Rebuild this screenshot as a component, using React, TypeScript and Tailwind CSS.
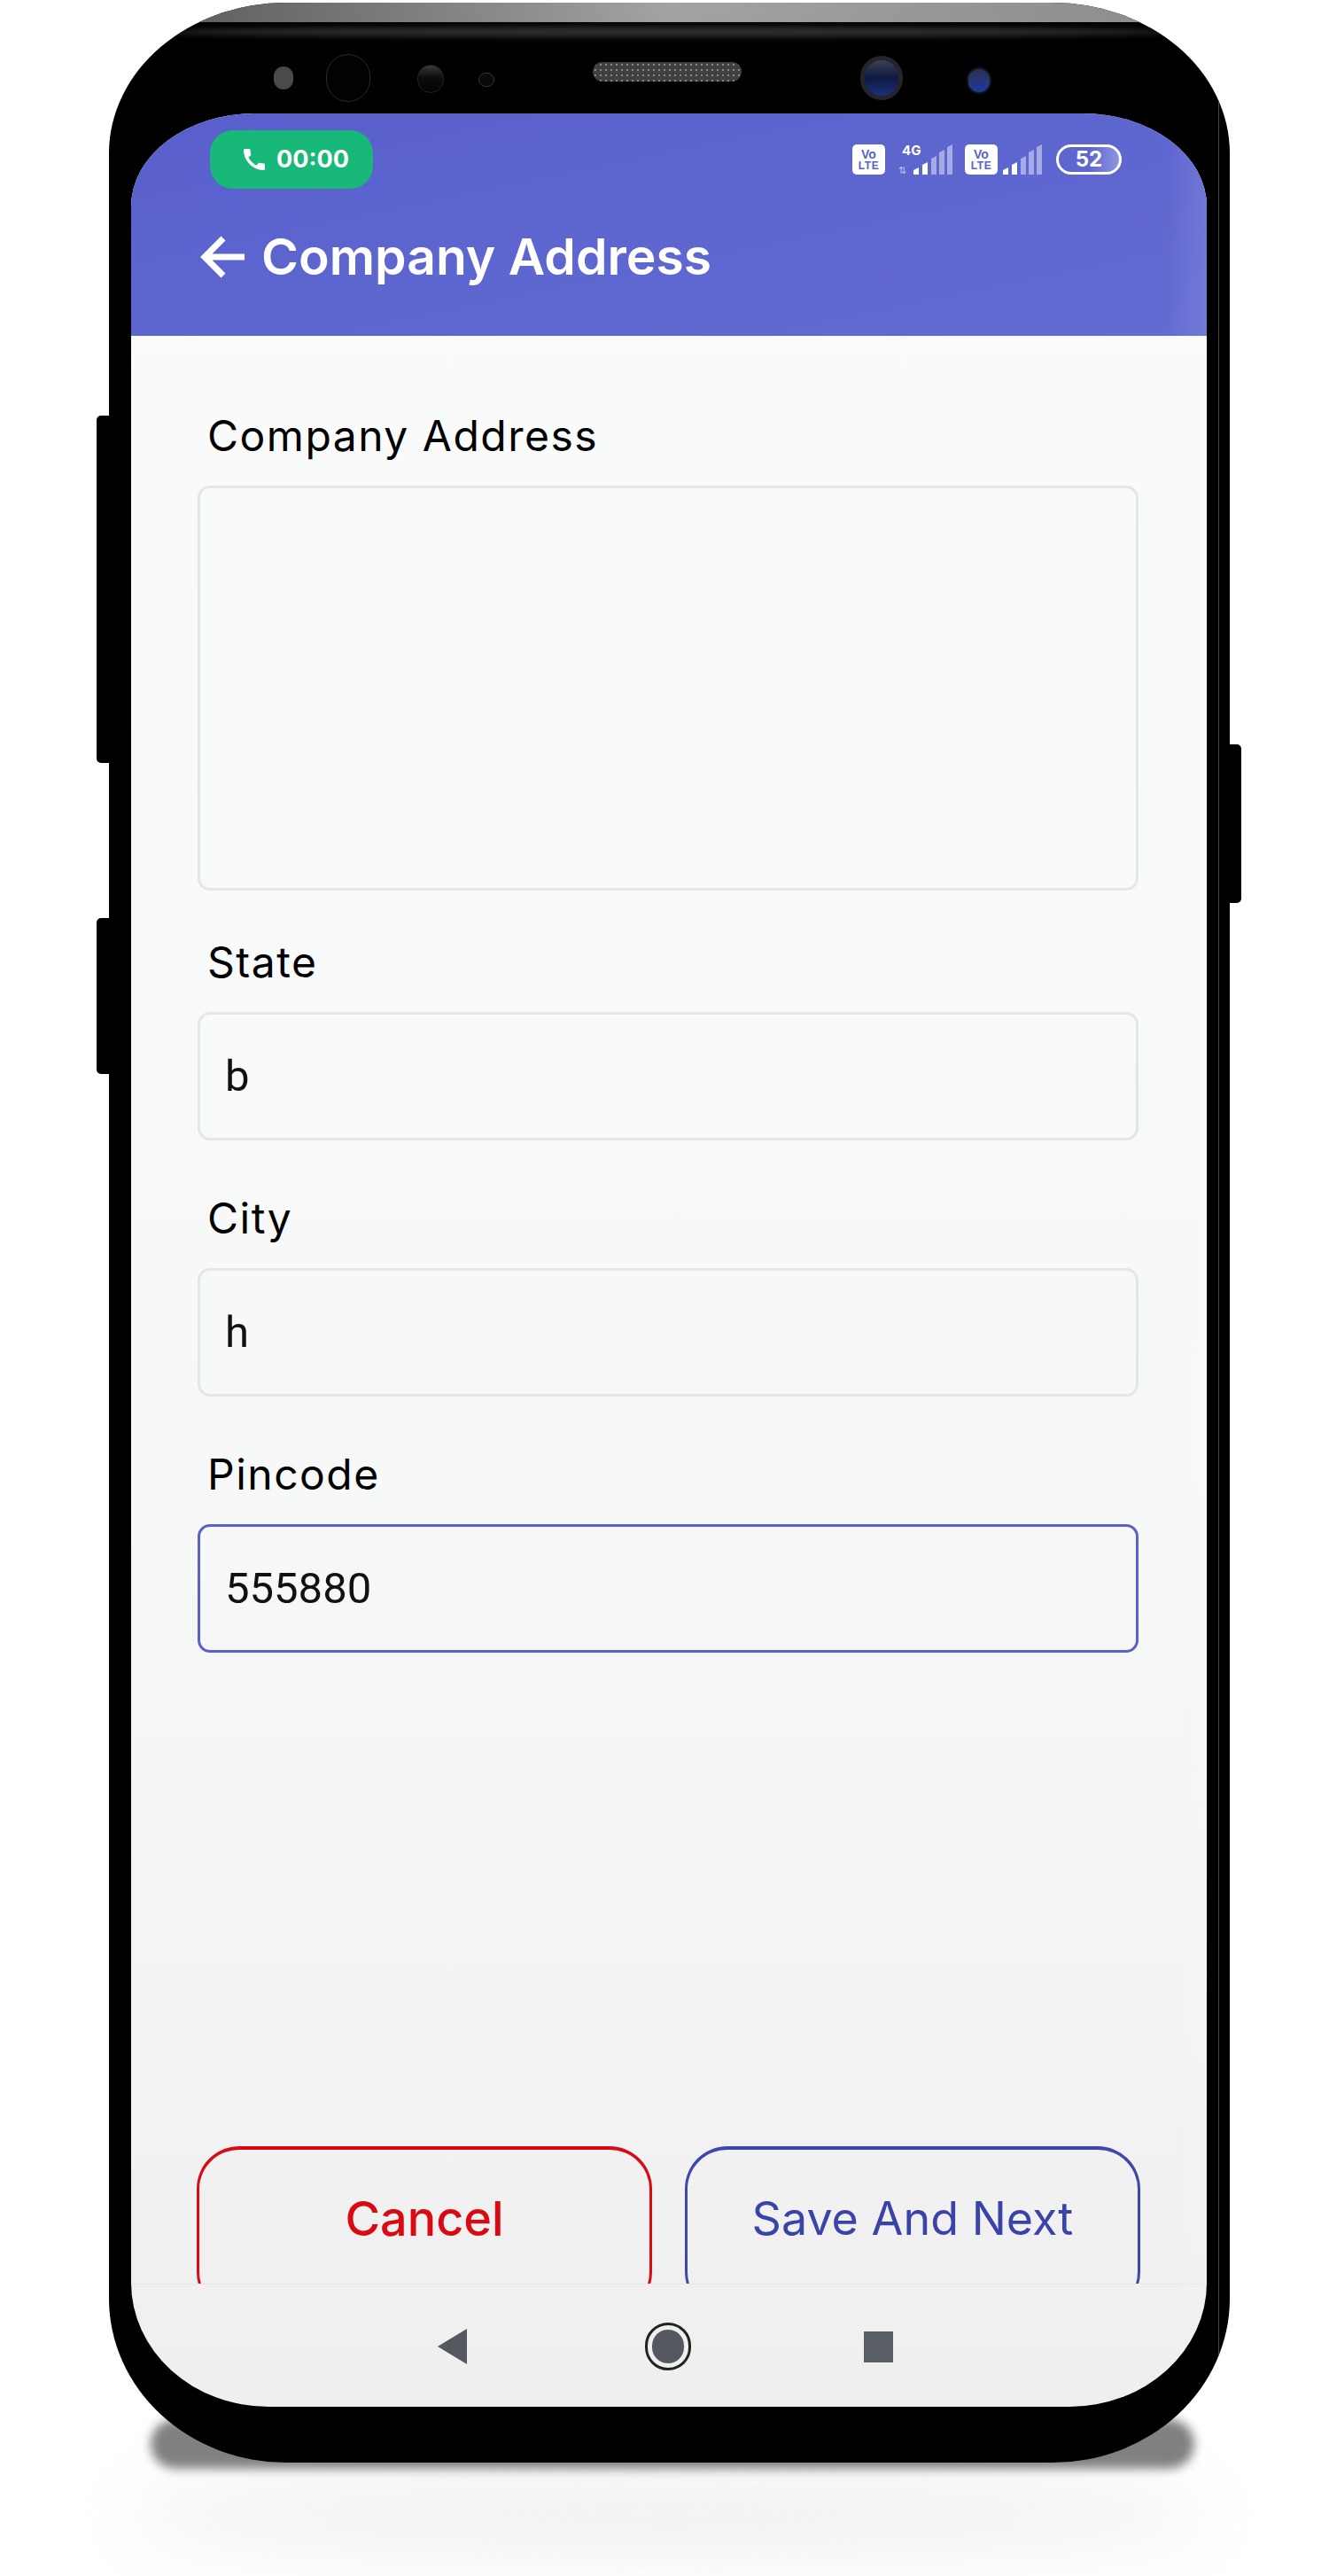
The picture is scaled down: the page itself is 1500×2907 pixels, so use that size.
import { MdCall } from "react-icons/md";

const poppins = "font-['Inter','Liberation_Sans',sans-serif]";

function Volte() {
  return (
    <div className="flex h-[34px] w-[37px] flex-col items-center justify-center rounded-[5px] bg-white font-['Liberation_Sans',sans-serif] font-bold text-[#5a62c8]">
      <span className="text-[14px] leading-[14px]">Vo</span>
      <span className="text-[12px] leading-[13px] tracking-[0.5px]">LTE</span>
    </div>
  );
}

function Signal() {
  const bars = [
    { x: 0, h: 8 },
    { x: 10, h: 14 },
    { x: 20, h: 21 },
    { x: 29, h: 28 },
    { x: 38, h: 34 },
  ];
  return (
    <svg width="44" height="34" viewBox="0 0 44 34" className="block">
      {bars.map((b, i) => (
        <path
          key={b.x}
          d={`M${b.x} 34V${37 - b.h}L${b.x + 6} ${34 - b.h}V34Z`}
          fill="white"
          opacity={i < 2 ? 1 : 0.45}
        />
      ))}
    </svg>
  );
}

function Field({
  label,
  value,
  active,
  tall,
  className,
}: {
  label: string;
  value?: string;
  active?: boolean;
  tall?: boolean;
  className?: string;
}) {
  return (
    <div className={`flex flex-col ${className ?? ""}`}>
      <label className={`${poppins} mb-[14px] flex h-[84px] items-center pl-[11px] text-[48px] tracking-[1.5px] text-black`}>
        {label}
      </label>
      {tall ? (
        <textarea
          readOnly
          className="h-[457px] resize-none rounded-[14px] border-[3px] border-[#e4e7e9] bg-transparent outline-none"
        />
      ) : (
        <input
          readOnly
          value={value}
          className={`h-[145px] rounded-[14px] bg-transparent pl-[28px] font-['Roboto',sans-serif] text-[49px] text-[#111] outline-none ${
            active ? "border-[3px] border-[#5b61cb]" : "border-[3px] border-[#e4e7e9]"
          }`}
        />
      )}
    </div>
  );
}

export default function App() {
  return (
    <div className="relative h-[2907px] w-[1500px] overflow-hidden bg-white pt-[3px] pl-[123px]">
      {/* floor shadow */}
      <div className="absolute top-[2795px] left-[140px] h-[85px] w-[1230px] rounded-[50%] bg-[#efefef] blur-2xl" />
      <div className="absolute top-[2730px] left-[170px] h-[56px] w-[1178px] rounded-[30px] bg-[#808080] blur-[6px]" />

      {/* side keys */}
      <div className="absolute top-[469px] left-[109px] h-[392px] w-[18px] rounded-l-[5px] bg-black" />
      <div className="absolute top-[1036px] left-[109px] h-[176px] w-[18px] rounded-l-[5px] bg-black" />
      <div className="absolute top-[840px] left-[1384px] h-[179px] w-[17px] rounded-r-[5px] bg-black" />

      <div className="relative flex h-[2776px] w-[1265px] flex-col overflow-hidden rounded-[200px_200px_200px_200px/170px_170px_185px_185px] bg-black pt-[125px] pr-[26px] pb-[63px] pl-[25px]">
        {/* top edge */}
        <div className="absolute top-0 left-0 h-[22px] w-full bg-linear-to-r from-[#555] via-[#a3a3a3] to-[#8a8a8a]" />
        <div className="absolute top-[27px] left-[60px] h-[12px] w-[1145px] rounded-[50%] bg-[#2c2c2c] blur-[3px]" />
        <div className="absolute top-0 right-[12px] h-full w-px bg-[#444]" />

        {/* sensors */}
        <div className="absolute top-[72px] left-[186px] h-[26px] w-[22px] rounded-full bg-[#4a4a4a]" />
        <div className="absolute top-[58px] left-[245px] h-[54px] w-[50px] rounded-full border border-[#2a2a2a] bg-[#020202]" />
        <div className="absolute top-[70px] left-[348px] h-[32px] w-[30px] rounded-full border border-[#222] bg-linear-to-b from-[#3a3a3a] via-[#0a0a0a] to-[#050505]" />
        <div className="absolute top-[79px] left-[417px] h-[16px] w-[18px] rounded-full border border-[#333] bg-[#0a0a0a]" />
        <div className="absolute top-[67px] left-[546px] h-[22px] w-[168px] rounded-full bg-[radial-gradient(#8a8a8a_1px,#3f3f3f_1.5px)] bg-[length:6px_6px]" />
        <div className="absolute top-[60px] left-[848px] h-[50px] w-[48px] rounded-full border-[5px] border-[#23252b] bg-linear-to-b from-[#3c4052] via-[#10193f] to-[#1a2f80]" />
        <div className="absolute top-[73px] left-[968px] h-[30px] w-[28px] rounded-full border-2 border-[#15151a] bg-linear-to-b from-[#2a3050] to-[#1c3aa0]" />

        {/* screen */}
        <div className="relative flex flex-1 flex-col overflow-hidden rounded-[140px_140px_155px_155px/105px_105px_140px_140px] bg-linear-to-b from-[#fafbfb] via-[#f7f8f8] via-60% to-[#efefef]">
          <header className="h-[251px] shrink-0 bg-linear-to-br from-[#585fcc] to-[#636cd2] pt-[19px]">
            <div className="flex items-center justify-between pr-[96px] pl-[89px]">
              <div className="flex h-[66px] w-[184px] items-center gap-[9px] rounded-[26px] bg-[#18b878] pl-[34px] font-['Inter',sans-serif] text-[27px] font-bold text-white">
                <MdCall size={32} />
                <span>00:00</span>
              </div>
              <div className="flex items-center">
                <Volte />
                <div className="relative ml-[15px] flex h-[34px] w-[61px] items-end justify-end">
                  <span className="absolute -top-[1px] left-[4px] font-['Inter',sans-serif] text-[15px] leading-none font-bold text-white">4G</span>
                  <span className="absolute bottom-0 left-0 text-[11px] leading-none text-white/60">⇅</span>
                  <Signal />
                </div>
                <div className="ml-[14px]">
                  <Volte />
                </div>
                <div className="ml-[6px]">
                  <Signal />
                </div>
                <div className="ml-[16px] flex h-[34px] w-[74px] items-center justify-center rounded-full border-[3px] border-white bg-linear-to-r from-transparent via-transparent to-[#8f94e0] font-['Inter',sans-serif] text-[24px] font-bold text-white">
                  52
                </div>
              </div>
            </div>
            <div className="mt-[37px] flex items-center pl-[78px]">
              <svg width="52" height="48" viewBox="0 0 52 48" fill="none" stroke="white" strokeWidth="7">
                <path d="M50 24H6M26 3L5 24L26 45" />
              </svg>
              <h1 className={`${poppins} ml-[17px] text-[57px] leading-[80px] font-semibold text-white`}>
                Company Address
              </h1>
            </div>
          </header>

          <main className="flex min-h-0 flex-1 flex-col overflow-hidden">
            <div className="flex flex-col pt-[71px] pr-[77px] pl-[75px]">
              <Field label="Company Address" tall />
              <Field label="State" value="b" className="mt-[39px]" />
              <Field label="City" value="h" className="mt-[46px]" />
              <Field label="Pincode" value="555880" active className="mt-[46px]" />
            </div>
            <div className="mt-[557px] flex gap-[37px] pl-[74px]">
              <button className={`${poppins} h-[190px] w-[514px] shrink-0 rounded-[48px] border-[3px] border-t-4 border-[#d90a12] pb-[28px] text-[54px] font-medium text-[#d90a12]`}>
                Cancel
              </button>
              <button className={`${poppins} h-[190px] w-[514px] shrink-0 rounded-[48px] border-[3px] border-t-4 border-[#3e47ad] pb-[28px] text-[52px] text-[#3a43a8]`}>
                Save And Next
              </button>
            </div>
          </main>

          <nav className="flex h-[139px] shrink-0 items-center border-t border-[#e6e6e6] pt-[2px] pl-[346px]">
            <svg width="33" height="40" viewBox="0 0 33 40" className="shrink-0">
              <path d="M33 0V40L0 20Z" fill="#55595f" />
            </svg>
            <div className="ml-[201px] flex h-[54px] w-[52px] shrink-0 items-center justify-center rounded-full border-[3px] border-[#222]">
              <div className="h-[38px] w-[36px] rounded-full bg-[#55595f]" />
            </div>
            <div className="ml-[195px] h-[35px] w-[33px] shrink-0 bg-[#5a5f66]" />
          </nav>

          {/* curved-glass sheen on the right edge */}
          <div className="absolute top-0 right-0 bottom-0 w-[46px] bg-linear-to-r from-transparent to-white/10" />
        </div>
      </div>
    </div>
  );
}
